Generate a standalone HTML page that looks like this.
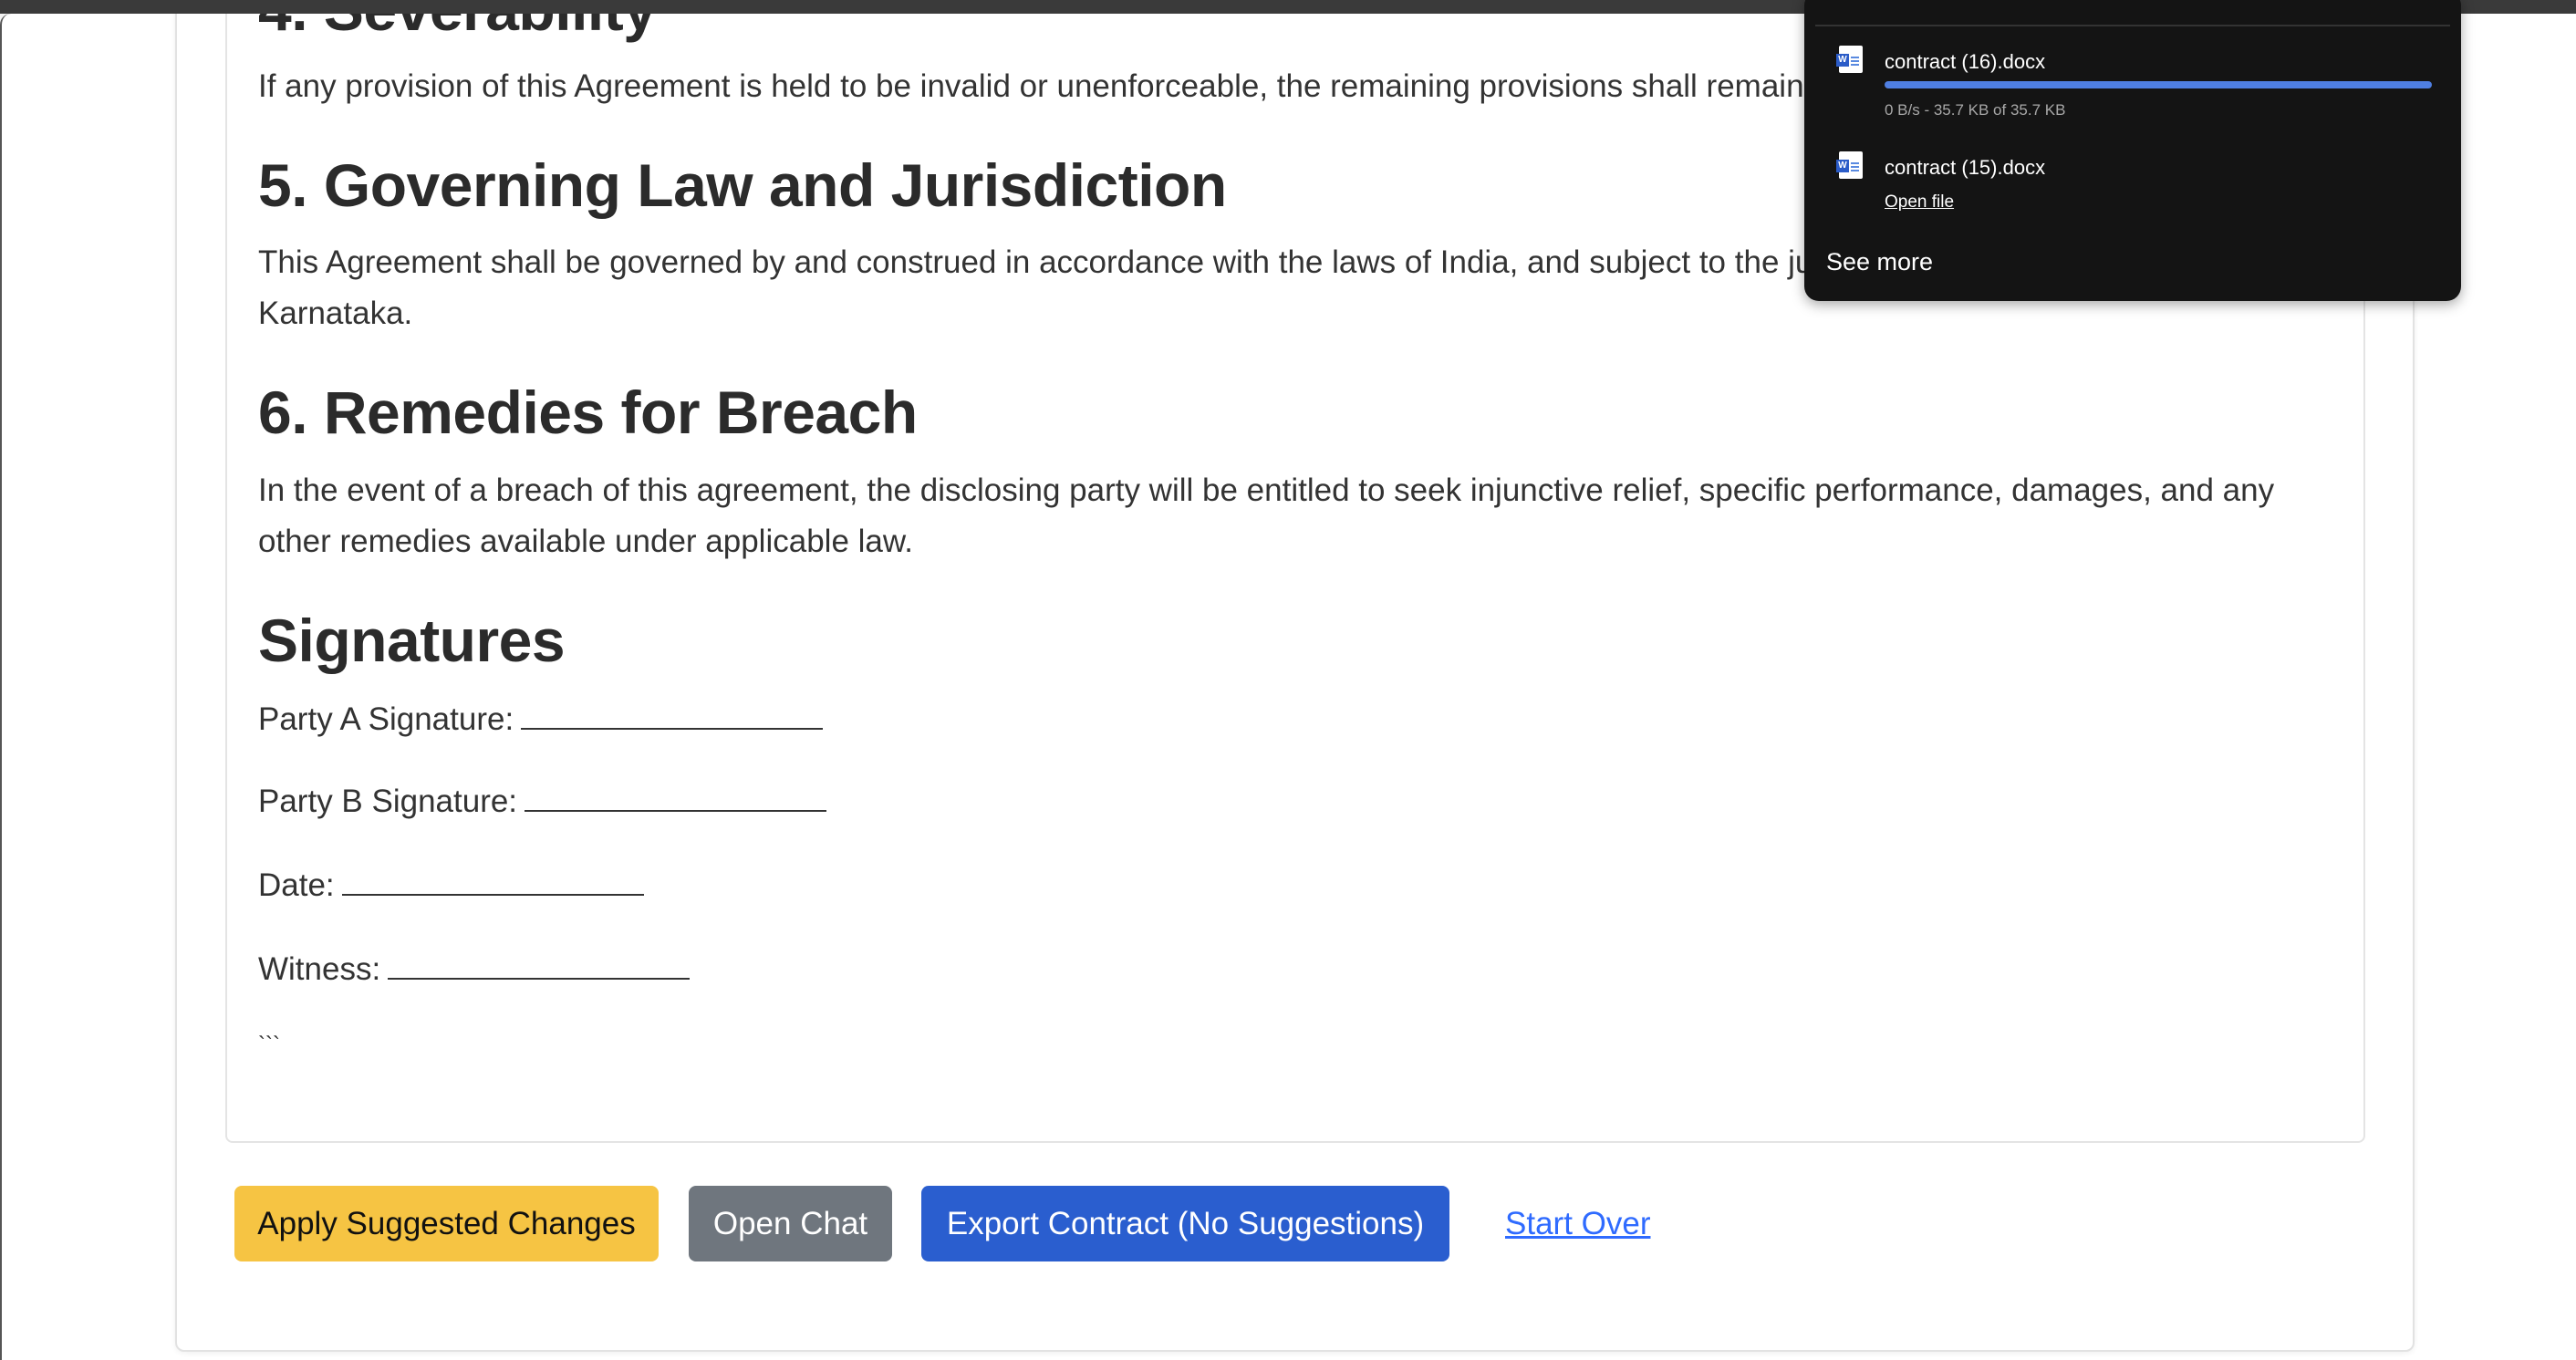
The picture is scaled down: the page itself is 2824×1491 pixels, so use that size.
<!DOCTYPE html>
<html><head><meta charset="utf-8"><style>
*{margin:0;padding:0;box-sizing:border-box}
html,body{width:2824px;height:1491px;overflow:hidden;background:#f3f3f3;font-family:"Liberation Sans",sans-serif}
.topbar{position:absolute;left:0;top:0;width:2824px;height:15px;background:#3a3a3a;z-index:5}
.win{position:absolute;left:0;top:15px;width:2824px;height:1476px;background:#fff;border-top-left-radius:12px;border-left:2px solid #555}
.outer{position:absolute;left:192px;top:-20px;width:2455px;height:1502px;border:2px solid #e2e2e2;border-radius:10px;background:#fff;box-shadow:0 2px 6px rgba(0,0,0,.06)}
.inner{position:absolute;left:247px;top:-20px;width:2346px;height:1273px;border:2px solid #e4e4e4;border-radius:8px;background:#fff}
.t{position:absolute;left:283px;color:#333;white-space:nowrap}
.p{font-size:35px;line-height:56px}
.h{font-size:66px;font-weight:bold;color:#2b2b2b;line-height:70px;letter-spacing:-0.5px}
.u{display:inline-block;width:331px;border-bottom:2px solid #333;height:26px;margin-left:8px}
.btn{position:absolute;top:1300px;height:83px;border-radius:8px;font-size:35px;line-height:83px;text-align:center;white-space:nowrap;z-index:3}
.dl{position:absolute;left:1978px;top:-10px;width:720px;height:340px;background:#141414;border-radius:16px;box-shadow:0 4px 14px rgba(0,0,0,.35);color:#fff;z-index:6}
.ic{position:absolute;width:26px;height:30px;background:#fff;border-radius:2px}
.ic b{position:absolute;left:-3px;top:9px;width:14px;height:14px;background:#2b5cc8;color:#fff;font-size:10px;line-height:14px;text-align:center;font-weight:bold}
.ic i{position:absolute;left:13px;height:2px;width:9px;background:#5a8ae0}
</style></head><body>
<div class="topbar"></div>
<div class="win"></div>
<div class="outer"></div>
<div class="inner"></div>

<div class="t h" style="top:-25px">4. Severability</div>
<div class="t p" style="top:67px">If any provision of this Agreement is held to be invalid or unenforceable, the remaining provisions shall remain in full force and effect.</div>
<div class="t h" style="top:168px">5. Governing Law and Jurisdiction</div>
<div class="t p" style="top:260px">This Agreement shall be governed by and construed in accordance with the laws of India, and subject to the jurisdiction of the courts of Bengaluru,</div>
<div class="t p" style="top:316px">Karnataka.</div>
<div class="t h" style="top:417px">6. Remedies for Breach</div>
<div class="t p" style="top:510px">In the event of a breach of this agreement, the disclosing party will be entitled to seek injunctive relief, specific performance, damages, and any</div>
<div class="t p" style="top:566px">other remedies available under applicable law.</div>
<div class="t h" style="top:667px">Signatures</div>
<div class="t p" style="top:761px">Party A Signature:<span class="u"></span></div>
<div class="t p" style="top:851px">Party B Signature:<span class="u"></span></div>
<div class="t p" style="top:943px">Date:<span class="u"></span></div>
<div class="t p" style="top:1035px">Witness:<span class="u"></span></div>
<div class="t" style="top:1132px;font-size:24px">&#96;&#96;&#96;</div>

<div class="btn" style="left:257px;width:465px;background:#f6c443;color:#111">Apply Suggested Changes</div>
<div class="btn" style="left:755px;width:223px;background:#6f767e;color:#fff">Open Chat</div>
<div class="btn" style="left:1010px;width:579px;background:#2a5ecf;color:#fff">Export Contract (No Suggestions)</div>
<div style="position:absolute;left:1650px;top:1300px;line-height:83px;font-size:35px;color:#2f6bff;text-decoration:underline">Start Over</div>

<div class="dl">
  <div style="position:absolute;left:12px;top:37px;width:696px;height:2px;background:#333"></div>
  <div class="ic" style="left:38px;top:60px"><b>W</b><i style="top:12px"></i><i style="top:16px"></i><i style="top:20px"></i></div>
  <div style="position:absolute;left:88px;top:65px;font-size:22px">contract (16).docx</div>
  <div style="position:absolute;left:88px;top:99px;width:600px;height:8px;border-radius:4px;background:#4f7fe2"></div>
  <div style="position:absolute;left:88px;top:121px;font-size:17px;color:#a8a8a8">0 B/s - 35.7 KB of 35.7 KB</div>
  <div class="ic" style="left:38px;top:176px"><b>W</b><i style="top:12px"></i><i style="top:16px"></i><i style="top:20px"></i></div>
  <div style="position:absolute;left:88px;top:181px;font-size:22px">contract (15).docx</div>
  <div style="position:absolute;left:88px;top:221px;font-size:19px;text-decoration:underline">Open file</div>
  <div style="position:absolute;left:24px;top:282px;font-size:27px">See more</div>
</div>
</body></html>
